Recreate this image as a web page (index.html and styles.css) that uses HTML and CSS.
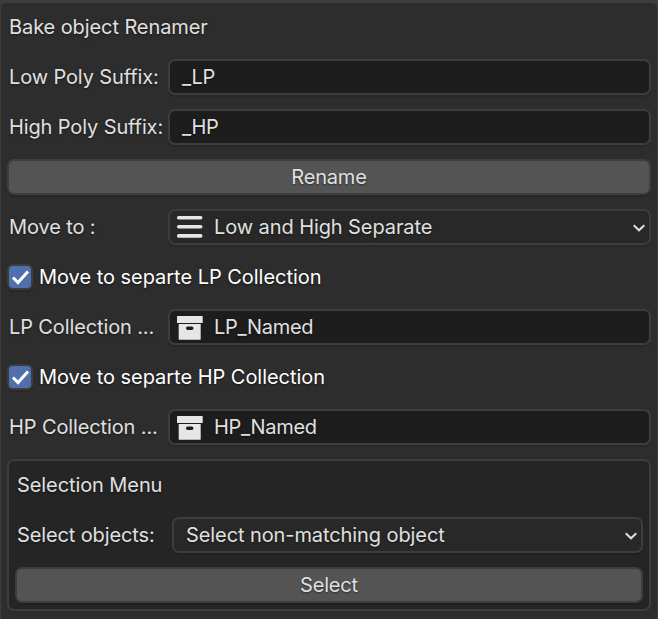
FILE: index.html
```html
<!DOCTYPE html>
<html lang="en">
<head>
<meta charset="utf-8">
<title>Bake object Renamer</title>
<link rel="stylesheet" href="styles.css">
</head>
<body>
<main class="panel">
  <h1 class="title">Bake object Renamer</h1>
  <div class="row"><label>Low Poly Suffix:</label><div class="field value">_LP</div></div>
  <div class="row"><label>High Poly Suffix:</label><div class="field value">_HP</div></div>
  <button class="button">Rename</button>
  <div class="row"><label>Move to :</label>
    <div class="field select with-icon">
      <svg class="icon" viewBox="0 0 28 28"><path d="M2.700 4.700h22M2.700 13.800h22M2.700 22.900h22" stroke="#e6e6e6" stroke-width="3.600" stroke-linecap="round"/></svg>
      <span>Low and High Separate</span>
      <svg class="chevron" viewBox="0 0 14 10"><path d="M1.700 2.300l5.300 5 5.300-5"/></svg>
    </div>
  </div>
  <div class="check"><span class="box"><svg viewBox="0 0 22 22"><path d="M4 11.500l5 5L19 5.500"/></svg></span><span>Move to separte LP Collection</span></div>
  <div class="row"><label>LP Collection ...</label>
    <div class="field value with-icon"><svg class="icon" viewBox="0 0 28 28"><path fill="#e6e6e6" fill-rule="evenodd" d="M1.500 3h24.700q.5 0 .5.500v6.500H1V3.500q0-.5.500-.5zM2.700 11h22v15.300q0 .5-.5.500H3.200q-.5 0-.5-.5zM11.700 13.500q-1.700 0-1.700 1.800t1.700 1.800h4.100q1.700 0 1.700-1.800t-1.700-1.800z"/></svg><span>LP_Named</span></div>
  </div>
  <div class="check"><span class="box"><svg viewBox="0 0 22 22"><path d="M4 11.500l5 5L19 5.500"/></svg></span><span>Move to separte HP Collection</span></div>
  <div class="row"><label>HP Collection ...</label>
    <div class="field value with-icon"><svg class="icon" viewBox="0 0 28 28"><path fill="#e6e6e6" fill-rule="evenodd" d="M1.500 3h24.700q.5 0 .5.500v6.500H1V3.500q0-.5.500-.5zM2.700 11h22v15.300q0 .5-.5.500H3.200q-.5 0-.5-.5zM11.700 13.500q-1.700 0-1.700 1.800t1.700 1.800h4.100q1.700 0 1.700-1.800t-1.700-1.800z"/></svg><span>HP_Named</span></div>
  </div>
  <section class="group">
    <h2 class="title">Selection Menu</h2>
    <div class="row"><label>Select objects:</label><div class="field select"><span>Select non-matching object</span><svg class="chevron" viewBox="0 0 14 10"><path d="M1.700 2.300l5.300 5 5.300-5"/></svg></div></div>
    <button class="button">Select</button>
  </section>
</main>
</body>
</html>
```
FILE: styles.css
```css
* { box-sizing: border-box; }
body { margin: 0; padding: 3px 1px 0; background: #3d3d3d; color: #e0e0e0; font: 20px/36px Inter, sans-serif; letter-spacing: -0.09px; text-shadow: 0 1px 2px rgba(0, 0, 0, .5); }
.panel { height: 616px; padding: 6px; border-radius: 5px 5px 0 0; background: #2d2d2d; display: flex; flex-direction: column; gap: 14px; }
.title { margin: 0; padding-left: 2px; height: 36px; font-size: 20px; font-weight: 400; }
.row { display: grid; grid-template-columns: 161px 1fr; height: 36px; }
.row label { padding-left: 2px; white-space: nowrap; letter-spacing: -0.12px; }
.field { display: flex; align-items: center; height: 36px; padding: 0 12px; border: 2px solid #3d3d3d; border-radius: 7px; background: #1d1d1d; box-shadow: 0 2px 0 #282828; }
.value { letter-spacing: -0.3px; }
.select { background: #282828; }
.with-icon { padding-left: 6px; gap: 10px; }
.icon { width: 28px; height: 28px; }
.chevron { width: 14px; height: 10px; margin-left: auto; margin-right: -9px; position: relative; top: 1px; fill: none; stroke: #e0e0e0; stroke-width: 2; }
.button { height: 36px; padding: 0; border: 2px solid #3d3d3d; border-radius: 7px; background: #545454; box-shadow: 0 2px 0 #262626; color: #e0e0e0; font: inherit; line-height: 32px; letter-spacing: -0.2px; text-shadow: inherit; }
.check { display: flex; align-items: center; gap: 6px; height: 36px; color: #fff; letter-spacing: -0.03px; }
.box { width: 26px; height: 26px; border: 2px solid #3d3d3d; border-radius: 6px; background: #4f70ad; box-shadow: 0 2px 0 #282828; }
.box svg { display: block; fill: none; stroke: #fff; stroke-width: 3; }
.group { display: flex; flex-direction: column; gap: 14px; height: 152px; flex: none; padding: 6px; border: 2px solid #3d3d3d; border-radius: 7px; background: #252525; }
.group .row { grid-template-columns: 157px 1fr; }
.group .field, .group .button { box-shadow: 0 2px 0 #202020; }
```
